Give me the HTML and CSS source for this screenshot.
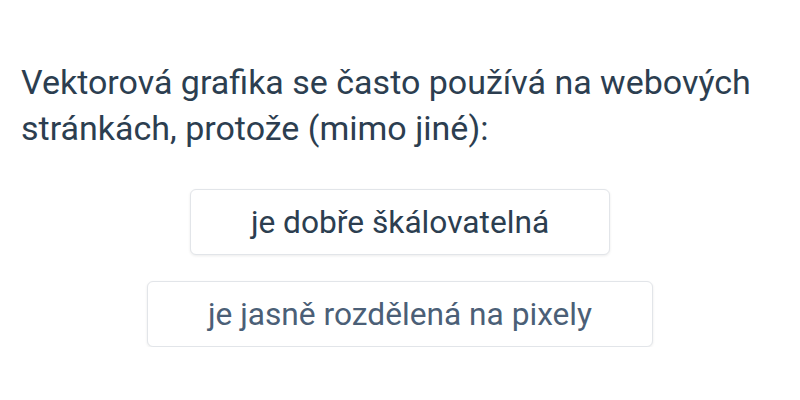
FILE: index.html
```html
<!DOCTYPE html>
<html lang="cs">
<head>
    <meta charset="UTF-8">
    <meta name="viewport" content="width=device-width, initial-scale=1.0">
    <title>Otázka</title>
    <link rel="stylesheet" href="styles.css">
</head>
<body>
    <div class="question">
        <p class="question-text">Vektorová grafika se často používá na webových stránkách, protože (mimo jiné):</p>

        <div class="answers">
            <button class="answer">je dobře škálovatelná</button>
            <button class="answer answer-muted">je jasně rozdělená na pixely</button>
        </div>
    </div>
</body>
</html>
```

FILE: styles.css
```css
body {
    font-family: Roboto, 'Liberation Sans', Arial, sans-serif;
    margin: 0;
    background-color: #ffffff;
    color: #2c3e50;
}

.question {
    padding: 59px 21px 0 21px;
}

.question-text {
    font-size: 34px;
    line-height: 46px;
    margin: 0 0 38px 0;
    color: #2c3e50;
}

.answers {
    display: flex;
    flex-direction: column;
    align-items: center;
    gap: 26px;
}

.answer {
    font-family: inherit;
    font-size: 31.7px;
    height: 66px;
    padding: 0 60px;
    background: #ffffff;
    color: #2c3e50;
    border: 1px solid #e2e5e9;
    border-radius: 6px;
    box-shadow: 0 1px 3px rgba(0, 0, 0, 0.08);
    cursor: pointer;
}

.answer-muted {
    color: #4b5f77;
}
```
